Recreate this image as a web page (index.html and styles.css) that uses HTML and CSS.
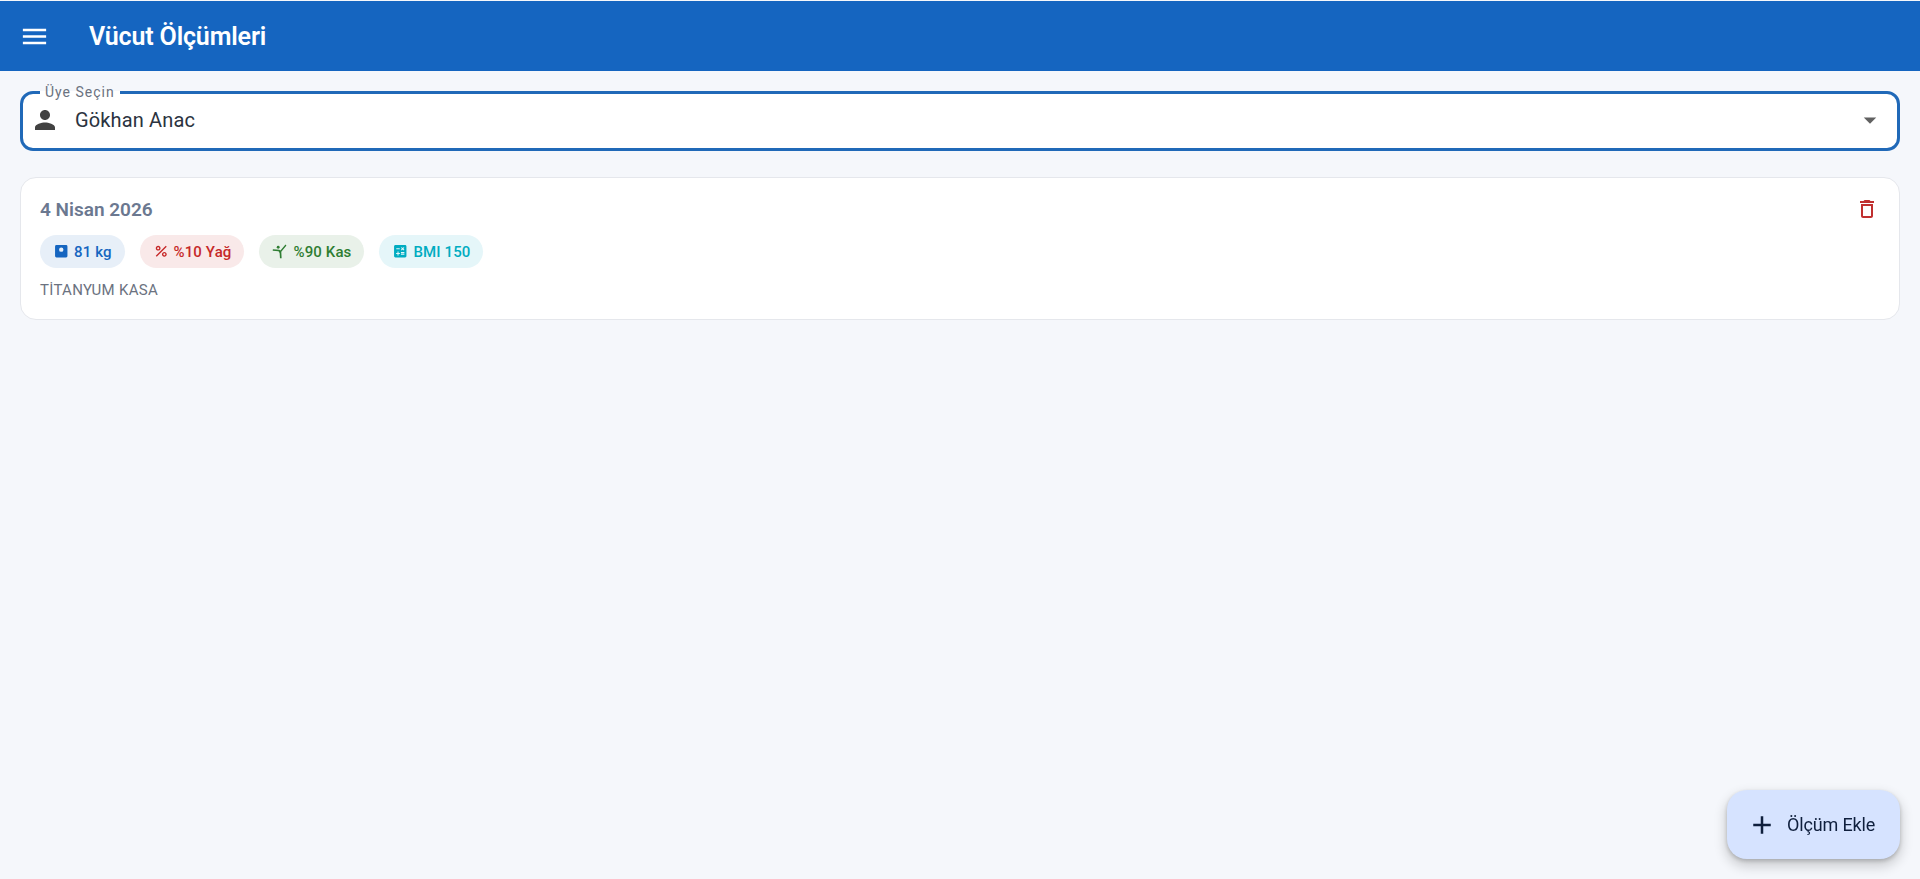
FILE: index.html
```html
<!DOCTYPE html>
<html lang="tr">
<head>
<meta charset="utf-8">
<title>Vücut Ölçümleri</title>
<link rel="stylesheet" href="styles.css">
</head>
<body>
<header class="appbar">
  <svg class="menu-icon" viewBox="0 0 24 24"><path d="M3 18h18v-2H3v2zm0-5h18v-2H3v2zm0-7v2h18V6H3z"/></svg>
  <h1 class="title">Vücut Ölçümleri</h1>
</header>
<main class="content">
  <fieldset class="select">
    <legend class="select-label">Üye Seçin</legend>
    <svg class="person-icon" viewBox="0 0 24 24"><path d="M12 12c2.21 0 4-1.79 4-4s-1.79-4-4-4-4 1.79-4 4 1.79 4 4 4zm0 2c-2.67 0-8 1.34-8 4v2h16v-2c0-2.66-5.33-4-8-4z"/></svg>
    <span class="select-value">Gökhan Anac</span>
    <svg class="arrow-icon" viewBox="0 0 24 24"><path d="M7 10l5 5 5-5z"/></svg>
  </fieldset>
  <article class="card">
    <div class="card-head">
      <h2 class="date">4 Nisan 2026</h2>
      <svg class="delete-icon" viewBox="0 0 24 24"><path d="M6 19c0 1.1.9 2 2 2h8c1.1 0 2-.9 2-2V7H6v12zM8 9h8v10H8V9zm7.5-5l-1-1h-5l-1 1H5v2h14V4z"/></svg>
    </div>
    <div class="chips">
      <span class="chip chip-blue"><svg class="chip-icon" viewBox="0 0 24 24"><path fill-rule="evenodd" d="M5 3h14a2 2 0 0 1 2 2v14a2 2 0 0 1-2 2H5a2 2 0 0 1-2-2V5a2 2 0 0 1 2-2zm7 3.5a3.2 3.2 0 1 0 0 6.4 3.2 3.2 0 0 0 0-6.4z"/></svg>81 kg</span>
      <span class="chip chip-red"><svg class="chip-icon" viewBox="0 0 24 24"><path d="M7.5 11C9.43 11 11 9.43 11 7.5S9.43 4 7.5 4 4 5.57 4 7.5 5.57 11 7.5 11zm0-5C8.33 6 9 6.67 9 7.5S8.33 9 7.5 9 6 8.33 6 7.5 6.67 6 7.5 6zM4 18.59 18.59 4 20 5.41 5.41 20 4 18.59zM16.5 13c-1.93 0-3.5 1.57-3.5 3.5s1.57 3.5 3.5 3.5 3.5-1.57 3.5-3.5-1.57-3.5-3.5-3.5zm0 5c-.83 0-1.5-.67-1.5-1.5s.67-1.5 1.5-1.5 1.5.67 1.5 1.5-.67 1.5-1.5 1.5z"/></svg>%10 Yağ</span>
      <span class="chip chip-green"><svg class="chip-icon" viewBox="0 0 24 24"><path d="M21 3.5 13.5 12.6 14 22h-2.4l-.5-7.6-1.6-2.3L1 11.4l.3-2.2 9.2.7 1.8 1 7.3-8.6z"/><circle cx="9" cy="6.2" r="2.1"/></svg>%90 Kas</span>
      <span class="chip chip-cyan"><svg class="chip-icon" viewBox="0 0 24 24"><path d="M19 3H5c-1.1 0-2 .9-2 2v14c0 1.1.9 2 2 2h14c1.1 0 2-.9 2-2V5c0-1.1-.9-2-2-2zm-5.97 4.06L14.09 6l1.41 1.41L16.91 6l1.06 1.06-1.41 1.41 1.41 1.41-1.06 1.06-1.41-1.4-1.41 1.41-1.06-1.06 1.41-1.41-1.41-1.42zm-6.78.66h5v1.5h-5v-1.5zM11.5 16h-2v2H8v-2H6v-1.5h2v-2h1.5v2h2V16zm6.5 1.25h-5v-1.5h5v1.5zm0-2.5h-5v-1.5h5v1.5z"/></svg>BMI 150</span>
    </div>
    <p class="note">TİTANYUM KASA</p>
  </article>
</main>
<button class="fab" type="button">
  <svg class="fab-icon" viewBox="0 0 24 24"><path d="M19 13h-6v6h-2v-6H5v-2h6V5h2v6h6v2z"/></svg>
  <span>Ölçüm Ekle</span>
</button>
</body>
</html>
```
FILE: styles.css
```css
* { box-sizing: border-box; }
html, body { height: 100%; }
body {
  margin: 0;
  padding-top: 1px;
  background: #f5f7fb;
  font-family: Roboto, "Noto Sans", sans-serif;
  overflow: hidden;
}
.appbar {
  display: flex;
  align-items: center;
  height: 70px;
  padding: 0 20px;
  background: #1565c0;
  color: #fff;
}
.menu-icon { width: 31px; height: 31px; margin-left: -1px; fill: #fff; }
.title {
  margin: 0 0 0 39px;
  font-size: 25px;
  font-weight: 600;
  letter-spacing: -.15px;
}
.content { padding: 14px 20px 0; }
.select {
  display: flex;
  align-items: center;
  height: 66px;
  margin: 0;
  padding: 0 12px 7px 7px;
  border: 3px solid #2069b8;
  border-radius: 13px;
  background: #fff;
  min-width: 0;
}
.select-label {
  margin-left: 10px;
  padding: 0 5px;
  font-size: 14px;
  line-height: 14px;
  letter-spacing: 1px;
  color: #6b7280;
}
.person-icon { width: 30px; height: 30px; fill: #424242; flex: none; }
.select-value {
  flex: 1;
  margin-left: 15px;
  font-size: 20px;
  letter-spacing: .15px;
  color: #2b3340;
}
.arrow-icon { width: 30px; height: 30px; fill: #616161; flex: none; }
.card {
  margin-top: 26px;
  height: 143px;
  padding: 19px 19px 0;
  border: 1px solid #e5e7ec;
  border-radius: 16px;
  background: #fff;
}
.card-head { display: flex; align-items: center; justify-content: space-between; height: 24px; }
.date { margin: 0; font-size: 19px; font-weight: 600; color: #6b7890; }
.delete-icon { width: 24px; height: 24px; fill: #c03030; margin-right: 1px; }
.chips { display: flex; gap: 15px; margin-top: 14px; }
.chip {
  display: flex;
  align-items: center;
  height: 33px;
  padding: 0 13px;
  border-radius: 17px;
  font-size: 15px;
  font-weight: 500;
  letter-spacing: .12px;
}
.chip-icon { width: 16.5px; height: 16.5px; margin-right: 4.5px; fill: currentColor; flex: none; }
.chip-blue { background: #e7eff8; color: #1565c0; }
.chip-red { background: #f9e9e9; color: #c62828; }
.chip-green { background: #e9f1e9; color: #2e7d32; }
.chip-cyan { background: #e5f6f9; color: #00acc1; }
.note { margin: 13px 0 0; font-size: 15px; letter-spacing: .3px; color: #6b7280; }
.fab {
  position: fixed;
  right: 20px;
  bottom: 20px;
  display: flex;
  align-items: center;
  width: 173px;
  height: 69px;
  padding: 0 0 0 20px;
  border: 0;
  border-radius: 20px;
  background: #d6e3ff;
  box-shadow: 0 6px 12px 2px rgba(0,0,0,.16), 0 2px 4px rgba(0,0,0,.2);
  color: #0f1f3d;
  font-family: inherit;
  font-size: 18px;
  letter-spacing: -.15px;
}
.fab-icon { width: 30px; height: 30px; fill: currentColor; margin-right: 10px; }
```
